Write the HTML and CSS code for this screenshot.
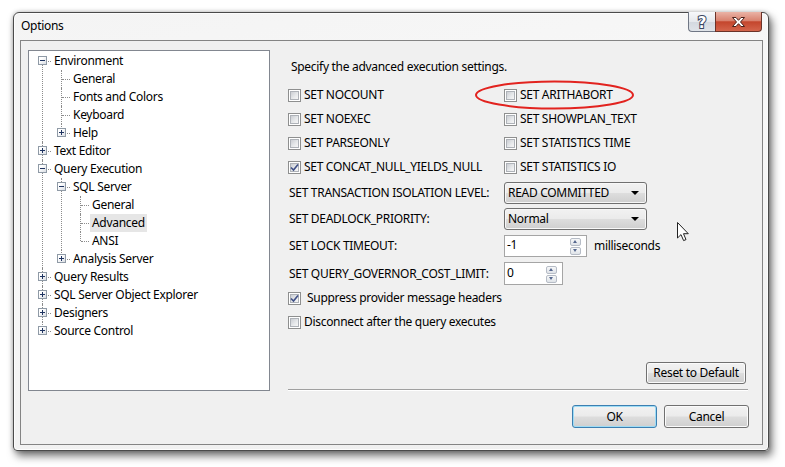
FILE: index.html
```html
<!DOCTYPE html>
<html lang="en">
<head>
    <meta charset="UTF-8">
    <meta name="viewport" content="width=device-width, initial-scale=1.0">
    <title>Options</title>
    <link rel="stylesheet" href="styles.css">
</head>
<body>

<div class="window">
    <div class="titlebar">
        <span class="title">Options</span>
        <div class="caption-buttons">
            <span class="cap-btn help">
                <svg width="14" height="16" viewBox="0 0 14 16"><text x="7" y="13.5" text-anchor="middle" class="help-glyph">?</text></svg>
            </span>
            <span class="cap-btn close">
                <svg width="15" height="12" viewBox="0 0 15 12"><path d="M1.5 1.5 H5 L7.5 4.3 L10 1.5 H13.5 L9.5 6 L13.5 10.5 H10 L7.5 7.7 L5 10.5 H1.5 L5.5 6 Z" fill="#fff" stroke="#4b2019" stroke-width="1"/></svg>
            </span>
        </div>
    </div>

    <div class="client">
        <div class="main">
            <div class="tree">
                <ul class="tree-list">
                    <li><span class="exp minus"></span><div class="row"><span class="label">Environment</span></div>
                        <ul>
                            <li><div class="row"><span class="label">General</span></div></li>
                            <li><div class="row"><span class="label">Fonts and Colors</span></div></li>
                            <li><div class="row"><span class="label">Keyboard</span></div></li>
                            <li><span class="exp plus"></span><div class="row"><span class="label">Help</span></div></li>
                        </ul>
                    </li>
                    <li><span class="exp plus"></span><div class="row"><span class="label">Text Editor</span></div></li>
                    <li><span class="exp minus"></span><div class="row"><span class="label">Query Execution</span></div>
                        <ul>
                            <li><span class="exp minus"></span><div class="row"><span class="label">SQL Server</span></div>
                                <ul>
                                    <li><div class="row"><span class="label">General</span></div></li>
                                    <li><div class="row"><span class="label selected">Advanced</span></div></li>
                                    <li><div class="row"><span class="label">ANSI</span></div></li>
                                </ul>
                            </li>
                            <li><span class="exp plus"></span><div class="row"><span class="label">Analysis Server</span></div></li>
                        </ul>
                    </li>
                    <li><span class="exp plus"></span><div class="row"><span class="label">Query Results</span></div></li>
                    <li><span class="exp plus"></span><div class="row"><span class="label">SQL Server Object Explorer</span></div></li>
                    <li><span class="exp plus"></span><div class="row"><span class="label">Designers</span></div></li>
                    <li><span class="exp plus"></span><div class="row"><span class="label">Source Control</span></div></li>
                </ul>
            </div>

            <div class="panel">
                <p class="intro">Specify the advanced execution settings.</p>

                <div class="checks">
                    <label class="check"><span class="box"></span>SET NOCOUNT</label>
                    <label class="check"><span class="box"></span>SET ARITHABORT</label>
                    <label class="check"><span class="box"></span>SET NOEXEC</label>
                    <label class="check"><span class="box"></span>SET SHOWPLAN_TEXT</label>
                    <label class="check"><span class="box"></span>SET PARSEONLY</label>
                    <label class="check"><span class="box"></span>SET STATISTICS TIME</label>
                    <label class="check"><span class="box checked"><svg width="9" height="9" viewBox="0 0 9 9"><path d="M1 4.5 L3.5 7 L8 1.5" fill="none" stroke="#3f4f86" stroke-width="1.6"/></svg></span>SET CONCAT_NULL_YIELDS_NULL</label>
                    <label class="check"><span class="box"></span>SET STATISTICS IO</label>
                </div>

                <div class="field first">
                    <span class="field-label">SET TRANSACTION ISOLATION LEVEL:</span>
                    <div class="combo">READ COMMITTED<span class="arrow"></span></div>
                </div>
                <div class="field">
                    <span class="field-label">SET DEADLOCK_PRIORITY:</span>
                    <div class="combo">Normal<span class="arrow"></span></div>
                </div>
                <div class="field spaced">
                    <span class="field-label">SET LOCK TIMEOUT:</span>
                    <div class="spin-group">
                        <div class="spin">
                            <span class="value">-1</span>
                            <span class="spin-buttons"><span class="spin-btn up"></span><span class="spin-btn down"></span></span>
                        </div>
                        <span class="unit">milliseconds</span>
                    </div>
                </div>
                <div class="field spaced">
                    <span class="field-label">SET QUERY_GOVERNOR_COST_LIMIT:</span>
                    <div class="spin small">
                        <span class="value">0</span>
                        <span class="spin-buttons"><span class="spin-btn up"></span><span class="spin-btn down"></span></span>
                    </div>
                </div>

                <div class="options">
                    <label class="check wide"><span class="box checked"><svg width="9" height="9" viewBox="0 0 9 9"><path d="M1 4.5 L3.5 7 L8 1.5" fill="none" stroke="#3f4f86" stroke-width="1.6"/></svg></span>Suppress provider message headers</label>
                    <label class="check"><span class="box"></span>Disconnect after the query executes</label>
                </div>

                <div class="spacer"></div>
                <div class="reset-row"><button class="btn reset">Reset to Default</button></div>
                <div class="separator"></div>
            </div>
        </div>

        <div class="buttons">
            <button class="btn default">OK</button>
            <button class="btn">Cancel</button>
        </div>
    </div>
</div>

<!-- red annotation ring and the mouse pointer lie over the dialog -->
<svg class="annotation" width="162" height="32" viewBox="0 0 162 32">
    <ellipse cx="80.5" cy="15" rx="78.5" ry="13.5" fill="none" stroke="#e2231f" stroke-width="2"/>
</svg>
<svg class="pointer" width="14" height="22" viewBox="0 0 14 22">
    <path d="M1.5 1.5 V17 L5 13.6 L7.6 19.6 L10 18.6 L7.5 12.7 H12.3 Z" fill="#fff" stroke="#222" stroke-width="1" stroke-linejoin="round"/>
</svg>

</body>
</html>
```

FILE: styles.css
```css
body { margin: 0; padding: 12px 0 0 13px; position: relative; width: 785px; height: 467px; box-sizing: border-box; overflow: hidden; background: #fff; font: 12px/16px "Noto Sans", "Open Sans", sans-serif; letter-spacing: -0.3px; color: #000; }
ul { list-style: none; margin: 0; padding: 0; }
p { margin: 0; }

/* window frame */
.window { width: 756px; height: 439px; box-sizing: border-box; display: flex; flex-direction: column; border: 1px solid #4a4a4a; border-radius: 6px 6px 4px 4px; background: linear-gradient(170deg, #f4f4f4 0%, #f8f8f8 40%, #eeeeee 100%); box-shadow: 3px 5px 9px rgba(0,0,0,0.55), 0 0 4px rgba(0,0,0,0.25), inset 0 0 0 1px #fcfcfc; }
.titlebar { height: 27px; display: flex; align-items: flex-start; padding: 0 6px 0 7px; }
.title { margin-top: 5px; }
.caption-buttons { margin-left: auto; margin-top: -1px; display: flex; }
.cap-btn { height: 20px; box-sizing: border-box; display: flex; align-items: center; justify-content: center; border: 1px solid #6f7684; border-top: none; }
.help { width: 27px; border-right: none; border-radius: 0 0 0 4px; background: linear-gradient(#f7f8fa 0%, #e5e8ec 50%, #d3d8df 52%, #dfe3e8 100%); }
.help-glyph { font: bold 15px "DejaVu Sans", sans-serif; fill: #fff; stroke: #3b4560; stroke-width: 2; paint-order: stroke; }
.close { width: 47px; border-color: #6b3329; border-radius: 0 0 4px 0; background: linear-gradient(#eab3a6 0%, #d98370 45%, #c4462d 52%, #d4654c 100%); }

.client { flex: 1; margin: 0 5px 5px 6px; display: flex; flex-direction: column; padding: 9px 13px 0 7px; border: 1px solid #848484; background: #f0f0f0; }
.main { display: flex; gap: 18px; height: 341px; }

/* tree view */
.tree { width: 242px; box-sizing: border-box; border: 1px solid #828790; background: #fff; padding: 1px 0 0 1px; }
.tree-list ul { margin-left: 19px; }
.tree-list li { position: relative; }
.tree-list li::before { content: ""; position: absolute; left: 12px; top: 0; bottom: 0; border-left: 1px dotted #8c8c8c; }
.tree-list > li:first-child::before { top: 9px; }
.tree-list li:last-child::before { bottom: auto; height: 9px; }
.tree-list li::after { content: ""; position: absolute; left: 13px; top: 9px; width: 8px; border-top: 1px dotted #8c8c8c; }
.row { height: 18px; line-height: 18px; padding-left: 22px; }
.label { display: inline-block; padding: 0 2px; white-space: nowrap; }
.label.selected { background: #e6e6e6; }
.exp { position: absolute; z-index: 1; left: 8px; top: 4px; width: 9px; height: 9px; box-sizing: border-box; border: 1px solid #8f9aa6; background: linear-gradient(135deg, #ffffff 30%, #d9dde3 100%); }
.exp::before { content: ""; position: absolute; left: 1px; top: 3px; width: 5px; height: 1px; background: #1f3461; }
.exp.plus::after { content: ""; position: absolute; left: 3px; top: 1px; width: 1px; height: 5px; background: #1f3461; }

/* settings panel */
.panel { width: 461px; display: flex; flex-direction: column; }
.intro { margin: 9px 0 0 3px; }
.checks { display: grid; grid-template-columns: 216px 1fr; grid-auto-rows: 24px; margin-top: 8px; }
.check { display: flex; align-items: center; gap: 3px; white-space: nowrap; }
.check.wide { gap: 6px; }
.box { position: relative; width: 13px; height: 13px; flex: none; box-sizing: border-box; border: 1px solid #8e8f8f; background: #fff; }
.box::before { content: ""; position: absolute; inset: 1px; border: 1px solid #aeb2b8; background: linear-gradient(135deg, #cbced3 0%, #e8eaec 60%, #f6f6f6 100%); }
.box svg { position: absolute; left: 1px; top: 1px; }

.field { display: grid; grid-template-columns: 216px auto; align-items: center; height: 22px; margin-top: 4px; }
.field.first { margin-top: 3px; }
.field.spaced { margin-top: 5px; }
.field-label { padding-left: 1px; white-space: nowrap; }
.combo { position: relative; width: 143px; height: 22px; box-sizing: border-box; display: flex; align-items: center; padding-left: 3px; border: 1px solid #707070; border-radius: 3px; background: linear-gradient(#f2f2f2 0%, #ebebeb 48%, #dddddd 52%, #cfcfcf 100%); box-shadow: inset 0 0 0 1px #f8f8f8; }
.arrow { margin-left: auto; margin-right: 7px; width: 0; height: 0; border-left: 4px solid transparent; border-right: 4px solid transparent; border-top: 4px solid #000; }

.spin-group { display: flex; align-items: center; gap: 7px; }
.spin { width: 83px; height: 22px; box-sizing: border-box; display: flex; align-items: flex-start; padding: 1px 5px 0 2px; border: 1px solid #a5a5a5; background: #fff; }
.spin.small { width: 59px; height: 23px; padding-top: 2px; }
.value { line-height: 16px; }
.spin-buttons { margin-left: auto; margin-top: 1px; display: flex; flex-direction: column; gap: 1px; }
.spin-btn { position: relative; width: 11px; height: 8px; box-sizing: border-box; border: 1px solid #b6bcc6; border-radius: 2px; background: linear-gradient(#f7f8f9, #dfe3e8); }
.spin-btn::before { content: ""; position: absolute; left: 2px; top: 1px; border-left: 2.5px solid transparent; border-right: 2.5px solid transparent; }
.spin-btn.up::before { border-bottom: 3px solid #56688f; }
.spin-btn.down::before { border-top: 3px solid #56688f; }

.options { display: grid; grid-auto-rows: 24px; margin-top: 2px; }
.spacer { flex: 1; }
.reset-row { display: flex; justify-content: flex-end; padding-right: 3px; margin-bottom: 5px; }
.separator { height: 0; margin-right: 1px; border-top: 1px solid #a0a0a0; border-bottom: 1px solid #fff; }

/* buttons */
.btn { font: inherit; letter-spacing: inherit; color: #000; padding: 0; height: 23px; width: 85px; border: 1px solid #707070; border-radius: 3px; background: linear-gradient(#f2f2f2 0%, #ebebeb 48%, #dddddd 52%, #cfcfcf 100%); box-shadow: inset 0 0 0 1px #fbfbfb; }
.btn.reset { width: 100px; height: 22px; }
.btn.default { border-color: #3c7fb1; box-shadow: inset 0 0 0 1px #9edcf5; }
.buttons { display: flex; justify-content: flex-end; gap: 7px; margin-top: 14px; }

/* overlays */
.annotation { position: absolute; left: 474px; top: 80px; }
.pointer { position: absolute; left: 676px; top: 221px; }
```
